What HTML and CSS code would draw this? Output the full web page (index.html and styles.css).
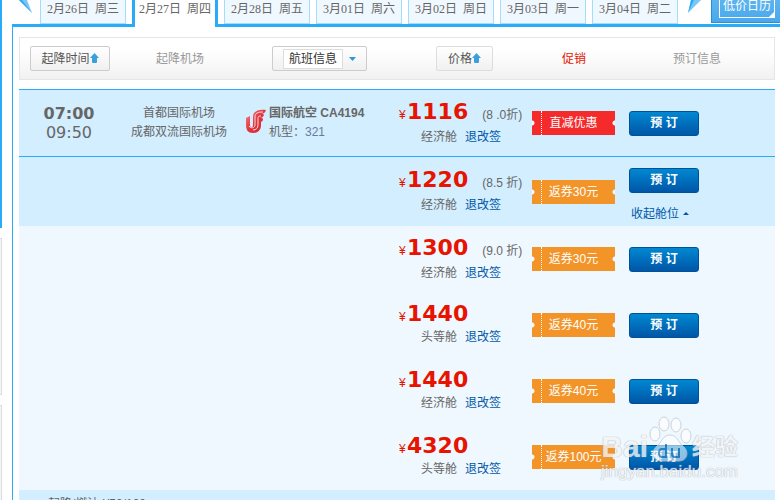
FILE: index.html
```html
<!DOCTYPE html>
<html lang="zh-CN">
<head>
  <meta charset="UTF-8">
  <title>航班查询</title>
  <link rel="stylesheet" href="styles.css">
</head>
<body>

  <div class="sidebar">
    <div class="side-blue"></div>
    <div class="side-box"></div>
    <div class="side-box side-box-last"></div>
  </div>

  <div class="main">
    <nav class="date-bar">
      <svg class="arrow arrow-prev" viewBox="0 0 14 14" width="14" height="14"><path d="M0 0h8l5 13z" fill="#7cc6f7"/><path d="M0 0h3l10 13z" fill="#29abf8"/></svg>
      <a class="date-tab" href="#">2月26日&nbsp; 周三</a>
      <a class="date-tab active" href="#">2月27日&nbsp; 周四</a>
      <a class="date-tab" href="#">2月28日&nbsp; 周五</a>
      <a class="date-tab" href="#">3月01日&nbsp; 周六</a>
      <a class="date-tab" href="#">3月02日&nbsp; 周日</a>
      <a class="date-tab" href="#">3月03日&nbsp; 周一</a>
      <a class="date-tab" href="#">3月04日&nbsp; 周二</a>
      <svg class="arrow arrow-next" viewBox="0 0 14 14" width="14" height="14"><path d="M14 0H4L1 13z" fill="#7cc6f7"/><path d="M7 0H4L1 13z" fill="#29abf8"/></svg>
      <button class="calendar-btn"><span>低价日历<svg viewBox="0 0 5 5" width="5" height="5"><path d="M5 0v5H0z" fill="#fff"/></svg></span></button>
    </nav>

    <div class="content">
      <div class="filter-bar">
        <div><button class="sort-btn sort-time">起降时间<svg viewBox="0 0 9 11" width="9" height="11"><path d="M4.500 0L9 5H7v4q0 1-1 1H3q-1 0-1-1V5H0z" fill="#3aa0dc"/></svg></button></div>
        <div>起降机场</div>
        <div><button class="sort-btn sort-flight"><span>航班信息</span><svg viewBox="0 0 7 4" width="7" height="4"><path d="M0 0h7L3.500 4z" fill="#2f96d6"/></svg></button></div>
        <div><button class="sort-btn sort-price">价格<svg viewBox="0 0 9 11" width="9" height="11"><path d="M4.500 0L9 5H7v4q0 1-1 1H3q-1 0-1-1V5H0z" fill="#3aa0dc"/></svg></button></div>
        <div class="promo-title">促销</div>
        <div>预订信息</div>
      </div>

      <table class="flights">
        <colgroup>
          <col class="col-time"><col class="col-airport"><col class="col-flight"><col class="col-price"><col class="col-promo"><col>
        </colgroup>
        <tbody>
          <tr class="first discount">
            <td class="time"><b>07:00</b>09:50</td>
            <td class="airport">首都国际机场<br>成都双流国际机场</td>
            <td>
              <div class="flight">
                <svg class="airline" viewBox="0 0 22 25" width="22" height="25">
                  <defs>
                    <linearGradient id="wing" x1="0" y1="0" x2="1" y2="1">
                      <stop offset="0" stop-color="#f58a8a"/>
                      <stop offset="0.500" stop-color="#e0343c"/>
                      <stop offset="1" stop-color="#d8262f"/>
                    </linearGradient>
                  </defs>
                  <path d="M1 10l4-2v9c0 3 3 3 3 0V9c0-6 6-8 13-7-1 3-3 4-5 4 2 0 3 0 3 1-1 2-2 3-4 3 2 0 3 0 3 1 0 2-1 2-2 3v3c0 5-3 8-8 8-5 0-7-3-7-8z" fill="url(#wing)"/>
                  <path d="M18 4c-5 0-8 1-8 5v8c0 3-4 4-6 1M16 8c-3 0-3 1-3 3v6c0 3-2 5-5 5" fill="none" stroke="#fbdada"/>
                </svg>
                <div><b>国际航空 CA4194</b><br>机型：<span class="plane">321</span></div>
              </div>
            </td>
            <td class="price"><div class="amount"><i>¥</i><b>1116</b><span>(8 .0折)</span></div><div class="cabin">经济舱<a href="#">退改签</a></div></td>
            <td class="promo"><div class="coupon red">直减优惠</div></td>
            <td class="order"><button class="book-btn">预 订</button></td>
          </tr>
          <tr class="second discount">
            <td colspan="3"></td>
            <td class="price"><div class="amount"><i>¥</i><b>1220</b><span>(8.5 折)</span></div><div class="cabin">经济舱<a href="#">退改签</a></div></td>
            <td class="promo"><div class="coupon">返券30元</div></td>
            <td class="order"><button class="book-btn">预 订</button><a class="fold" href="#">收起舱位<svg viewBox="0 0 6 3" width="6" height="3"><path d="M3 0l3 3H0z" fill="#0058a8"/></svg></a></td>
          </tr>
          <tr class="discount">
            <td colspan="3"></td>
            <td class="price"><div class="amount"><i>¥</i><b>1300</b><span>(9.0 折)</span></div><div class="cabin">经济舱<a href="#">退改签</a></div></td>
            <td class="promo"><div class="coupon">返券30元</div></td>
            <td class="order"><button class="book-btn">预 订</button></td>
          </tr>
          <tr>
            <td colspan="3"></td>
            <td class="price"><div class="amount"><i>¥</i><b>1440</b></div><div class="cabin">头等舱<a href="#">退改签</a></div></td>
            <td class="promo"><div class="coupon">返券40元</div></td>
            <td class="order"><button class="book-btn">预 订</button></td>
          </tr>
          <tr>
            <td colspan="3"></td>
            <td class="price"><div class="amount"><i>¥</i><b>1440</b></div><div class="cabin">经济舱<a href="#">退改签</a></div></td>
            <td class="promo"><div class="coupon">返券40元</div></td>
            <td class="order"><button class="book-btn">预 订</button></td>
          </tr>
          <tr>
            <td colspan="3"></td>
            <td class="price"><div class="amount"><i>¥</i><b>4320</b></div><div class="cabin">头等舱<a href="#">退改签</a></div></td>
            <td class="promo"><div class="coupon">返券100元</div></td>
            <td class="order"><button class="book-btn">预 订</button></td>
          </tr>
        </tbody>
      </table>
      <div class="detail">起降/燃油:¥50/120</div>
    </div>
  </div>

  <div class="watermark">
    <div class="mark-row">
      <span class="mark-bai">Bai</span>
      <svg viewBox="0 0 44 46" width="44" height="46">
        <g fill="#fff" fill-opacity="0.700" stroke="#c4cad0">
          <ellipse cx="7" cy="18" rx="5" ry="7"/>
          <ellipse cx="16" cy="8" rx="5" ry="7"/>
          <ellipse cx="28" cy="9" rx="5" ry="7"/>
          <ellipse cx="38" cy="20" rx="5" ry="7"/>
          <path d="M22 19c-7 0-8 7-13 11-7 6-4 15 4 15 4 0 14 0 18 0 8 0 11-9 4-15-5-4-6-11-13-11z"/>
        </g>
        <path d="M18 28v13h-4q-3 0-3-4t3-4h4M24 32v6q0 3 3 3h4v-9" fill="none" stroke="#2f7fc0" stroke-width="2"/>
      </svg>
      <span class="mark-cn">经验</span>
    </div>
    <div class="mark-url">jingyan.baidu.com</div>
  </div>

</body>
</html>
```
FILE: styles.css
```css
* {
  box-sizing: border-box;
}
body {
  margin: 0;
  display: flex;
  min-height: 100vh;
  position: relative;
  overflow: hidden;
  background: #fff;
  color: #666;
  font-family: "Liberation Sans", "Noto Sans CJK SC", sans-serif;
  font-size: 12px;
  line-height: 18px;
}
a {
  color: #0058a8;
  text-decoration: none;
}
button {
  font: inherit;
  padding: 0;
  cursor: pointer;
}
svg {
  display: block;
  flex: none;
}

/* left edge */
.sidebar {
  width: 12px;
  flex: none;
}
.side-blue {
  width: 2px;
  height: 228px;
  background: #29abf8;
}
.side-box {
  width: 2px;
  height: 157px;
  margin-top: 10px;
  background: #f5f5f5;
  border: 1px solid #ddd;
  border-left: none;
}
.side-box-last {
  height: 100px;
}

.main {
  flex: 1;
  display: flex;
  flex-direction: column;
}

/* date tabs */
.date-bar {
  display: flex;
  gap: 6px;
  height: 27px;
  border-bottom: 3px solid #29abf8;
}
.arrow-prev {
  margin: 0 1px 0 7px;
}
.arrow-next {
  margin-left: 3px;
}
.date-tab {
  width: 86px;
  color: #666;
  line-height: 19px;
  text-align: center;
  white-space: nowrap;
  background: #f0f8ff;
  border: 1px solid #a5dcfa;
  border-top: none;
  font-family: "Liberation Serif", "Noto Sans CJK SC", serif;
}
.date-tab.active {
  background: #fff;
  border: solid #29abf8;
  border-width: 0 3px;
  margin-bottom: -3px;
}
.calendar-btn {
  margin-left: auto;
  width: 69px;
  height: 23px;
  padding: 0 5px 4px 7px;
  border: 1px solid #2492d8;
  border-width: 0 0 1px 1px;
  background: linear-gradient(#5bb4f0, #49a9ec);
  color: #fff;
}
.calendar-btn span {
  display: block;
  position: relative;
  height: 18px;
  line-height: 12px;
  border: 1px solid #fff;
  border-top: none;
}
.calendar-btn svg {
  position: absolute;
  right: 0;
  bottom: 0;
}

.content {
  flex: 1;
  display: flex;
  flex-direction: column;
  border-left: 1px solid #29abf8;
  padding: 10px 5px 0 6px;
}

/* sort / filter header */
.filter-bar {
  display: grid;
  grid-template-columns: 102px 118px 161px 129px 90px 1fr;
  align-items: center;
  justify-items: center;
  height: 43px;
  margin-bottom: 9px;
  box-shadow: inset 0 0 0 1px #e6e6e6;
  background: linear-gradient(#fff 30%, #f1f1f1);
  color: #999;
}
.promo-title {
  color: #e61400;
}
.sort-btn {
  display: flex;
  align-items: center;
  justify-content: center;
  height: 25px;
  color: #555;
  border: 1px solid #ccc;
  border-radius: 2px;
  background: linear-gradient(#fff, #f0f0f0);
}
.sort-time {
  width: 80px;
}
.sort-flight {
  width: 95px;
  gap: 6px;
  color: #333;
}
.sort-flight span {
  padding: 0 5px;
  background: #fff;
  border: 1px solid #ddd;
}
.sort-price {
  width: 57px;
  border-color: #ddd;
}

/* flight list */
.flights {
  width: 100%;
  table-layout: fixed;
  border-collapse: separate;
  border-spacing: 0;
  background: #f0f8ff;
}
.col-time {
  width: 100px;
}
.col-airport {
  width: 120px;
}
.col-flight {
  width: 160px;
}
.col-price {
  width: 131px;
}
.col-promo {
  width: 90px;
}
.flights td {
  height: 66px;
  padding: 0;
}
.flights .first td {
  height: 68px;
  background: #d3eeff;
  border-top: 1px solid #29abf8;
  border-bottom: 1px solid #29abf8;
}
.flights .second td {
  height: 69px;
  background: #d3eeff;
}
.time {
  text-align: center;
  font-family: "DejaVu Sans", sans-serif;
  font-size: 16px;
  line-height: 19px;
}
.time b {
  display: block;
}
.airport {
  text-align: center;
  line-height: 19px;
}
.flight {
  display: flex;
  gap: 2px;
  padding-left: 6px;
  line-height: 19px;
}
.airline {
  margin-top: 4px;
}
.plane {
  color: #667d99;
}

.flights .price {
  vertical-align: top;
  padding-top: 9px;
}
.flights .second .price {
  padding-top: 10px;
}
.amount {
  display: flex;
  align-items: baseline;
  height: 26px;
  line-height: 26px;
  white-space: nowrap;
}
.amount i {
  width: 8px;
  color: #e61400;
  font-style: normal;
}
.amount b {
  color: #e61400;
  font-family: "DejaVu Sans", sans-serif;
  font-size: 22px;
}
.amount span {
  margin-left: 14px;
}
.cabin {
  display: flex;
  gap: 8px;
  padding: 1px 0 0 22px;
}
.discount .cabin {
  padding-top: 3px;
}

.flights .promo {
  padding-left: 2px;
}
.coupon {
  position: relative;
  width: 83px;
  height: 24px;
  line-height: 24px;
  text-align: center;
  color: #fff;
  background: radial-gradient(circle at 0 50%, #f0f8ff 2px, transparent 3px), radial-gradient(circle at 100% 50%, #f0f8ff 2px, transparent 3px), #f39429;
}
.coupon.red {
  background-color: #f52a2a;
}
.coupon::before {
  content: "";
  position: absolute;
  left: 9px;
  top: 0;
  height: 24px;
  border-left: 1px dotted #fff;
}

.flights .order {
  padding-left: 9px;
}
.flights .second .order {
  padding-top: 7px;
}
.book-btn {
  display: block;
  width: 70px;
  height: 25px;
  color: #fff;
  font-weight: bold;
  border: 1px solid #00509a;
  border-radius: 3px;
  background: linear-gradient(#0088d2, #0056a6);
}
.fold {
  display: flex;
  align-items: center;
  gap: 4px;
  padding: 12px 0 0 2px;
}

.detail {
  flex: 1;
  height: 10px;
  padding: 5px 0 0 29px;
  background: #d3eeff;
}

/* site watermark */
.watermark {
  position: absolute;
  right: 42px;
  top: 415px;
  color: rgba(255, 255, 255, 0.9);
  text-shadow: 0 0 1px #a4adb6, 0 0 1px #a4adb6;
  pointer-events: none;
  opacity: 0.8;
}
.mark-row {
  display: flex;
  align-items: flex-end;
  justify-content: flex-end;
  height: 47px;
}
.mark-bai {
  font-size: 30px;
  line-height: 30px;
  font-weight: bold;
}
.mark-cn {
  font-size: 23px;
  line-height: 30px;
  font-weight: bold;
}
.mark-url {
  font-size: 17px;
  line-height: 20px;
}
```
